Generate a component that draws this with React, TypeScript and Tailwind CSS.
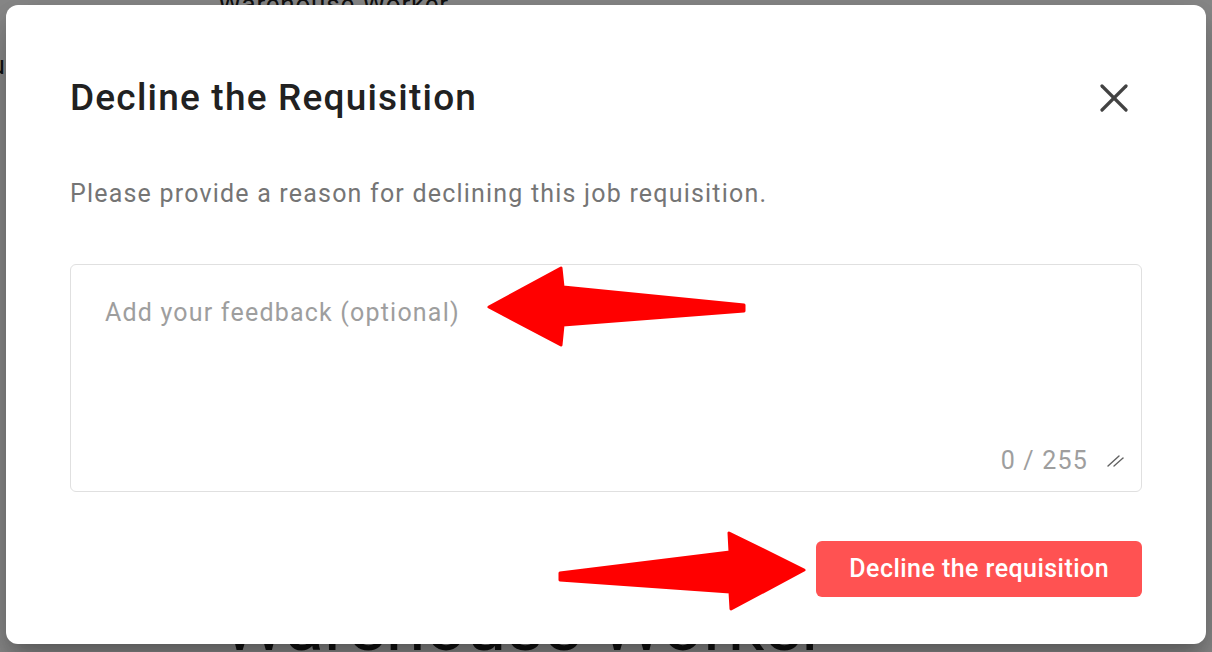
import React, { useState } from 'react';

function CloseIcon() {
  return (
    <svg width="28" height="28" viewBox="0 0 28 28" fill="none" stroke="#424242" strokeWidth="3.2" strokeLinecap="round">
      <line x1="2" y1="2" x2="26" y2="26" />
      <line x1="26" y1="2" x2="2" y2="26" />
    </svg>
  );
}

function ResizeHandle() {
  return (
    <svg width="18" height="14" viewBox="0 0 18 14" fill="none" stroke="#616161" strokeWidth="1.4" strokeLinecap="round">
      <line x1="1" y1="12" x2="12" y2="2" />
      <line x1="7" y1="12" x2="16" y2="4" />
    </svg>
  );
}

function Annotations() {
  return (
    <svg className="absolute inset-0 pointer-events-none" width="1212" height="652" viewBox="0 0 1212 652">
      <polygon
        points="489,307 561,268 563,287 744,305 744,311 563,325 561,345"
        fill="#ff0000"
        stroke="#ff0000"
        strokeWidth="3"
        strokeLinejoin="round"
      />
      <polygon
        points="804,570 729,533 730,552 560,573 560,580 730,592 731,609"
        fill="#ff0000"
        stroke="#ff0000"
        strokeWidth="3"
        strokeLinejoin="round"
      />
    </svg>
  );
}

export default function App() {
  const [feedback, setFeedback] = useState('');

  return (
    <div className="relative w-[1212px] h-[652px] overflow-hidden bg-white font-['Roboto',sans-serif]">
      {/* page behind the modal */}
      <div className="flex flex-col text-[#212121]">
        <div className="mt-[-11px] ml-[218px] text-[26px] leading-[30px] tracking-[0.8px]">Warehouse Worker</div>
        <div className="mt-[32px] ml-[-9px] text-[25px] leading-[30px]">u</div>
        <div className="mt-[509px] ml-[222px] text-[72px] leading-[72px] whitespace-nowrap">Warehouse Worker</div>
      </div>

      {/* backdrop */}
      <div className="absolute inset-0 bg-black/[0.46]" />

      {/* dialog */}
      <div className="absolute left-[6px] top-[5px] w-[1200px] h-[639px] bg-white rounded-[12px] px-16 pt-[71px] shadow-[0_11px_15px_-7px_rgba(0,0,0,0.2),0_24px_38px_3px_rgba(0,0,0,0.14),0_9px_46px_8px_rgba(0,0,0,0.12)]">
        <div className="flex items-center justify-between">
          <h2 className="text-[37px] leading-[43px] font-medium tracking-[1.2px] text-[#212121]">Decline the Requisition</h2>
          <button className="mr-[14px] flex items-center justify-center">
            <CloseIcon />
          </button>
        </div>

        <p className="mt-[59px] text-[25px] leading-[32px] tracking-[1.2px] text-[#757575]">
          Please provide a reason for declining this job requisition.
        </p>

        <div className="mt-[54px] h-[228px] flex flex-col border border-[#e0e0e0] rounded-[6px]">
          <textarea
            value={feedback}
            onChange={(e) => setFeedback(e.target.value.slice(0, 255))}
            placeholder="Add your feedback (optional)"
            className="flex-1 resize-none bg-transparent outline-none px-[34px] pt-[32px] text-[25px] leading-[32px] tracking-[1.2px] text-[#212121] placeholder:text-[#9e9e9e]"
          />
          <div className="flex items-center justify-end gap-[19px] pr-[16px] pb-[14px]">
            <span className="text-[25px] leading-[32px] tracking-[1.2px] text-[#9e9e9e]">{feedback.length} / 255</span>
            <ResizeHandle />
          </div>
        </div>

        <div className="mt-[49px] flex justify-end">
          <button className="h-[56px] px-[33px] rounded-[6px] bg-[#ff5252] text-white text-[25px] font-medium tracking-[0.45px]">
            Decline the requisition
          </button>
        </div>
      </div>

      <Annotations />
    </div>
  );
}
